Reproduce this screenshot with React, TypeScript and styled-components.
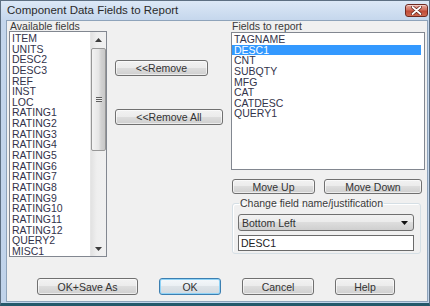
import styled, { createGlobalStyle } from 'styled-components';

const FONT = "'Liberation Sans Narrow', 'Arial Narrow', 'Liberation Sans', Arial, sans-serif";

const GlobalStyle = createGlobalStyle`
  html, body {
    margin: 0;
    padding: 0;
    background: #ffffff;
  }
  body {
    font-family: ${FONT};
    color: #000;
  }
`;

const availableFields = [
  'ITEM',
  'UNITS',
  'DESC2',
  'DESC3',
  'REF',
  'INST',
  'LOC',
  ...Array.from({ length: 12 }, (_, i) => `RATING${i + 1}`),
  'QUERY2',
  'MISC1',
];

const reportFields = ['TAGNAME', 'DESC1', 'CNT', 'SUBQTY', 'MFG', 'CAT', 'CATDESC', 'QUERY1'];

const App = () => {
  return (
    <>
      <GlobalStyle />
      <Window>
        <TitleBar>
          <Title>Component Data Fields to Report</Title>
          <CloseButton aria-label="close">
            <svg width="11" height="9" viewBox="0 0 11 9">
              <path d="M1.5 1 L9.5 8 M9.5 1 L1.5 8" stroke="#5a1d17" strokeWidth="3.2" strokeLinecap="round" />
              <path d="M1.5 1 L9.5 8 M9.5 1 L1.5 8" stroke="#ffffff" strokeWidth="1.8" strokeLinecap="round" />
            </svg>
          </CloseButton>
        </TitleBar>

        <Client>
          <Main>
            <Column>
              <Label>Available fields</Label>
              <ListBox $height={226}>
                <ListItems>
                  {availableFields.map((field) => (
                    <ListItem key={field}>{field}</ListItem>
                  ))}
                </ListItems>
                <ScrollBar>
                  <ArrowButton>
                    <svg width="7" height="4" viewBox="0 0 7 4">
                      <path d="M0 4 L3.5 0 L7 4 Z" fill="#3c3c3c" />
                    </svg>
                  </ArrowButton>
                  <Thumb>
                    <Grip />
                  </Thumb>
                  <Track />
                  <ArrowButton>
                    <svg width="7" height="4" viewBox="0 0 7 4">
                      <path d="M0 0 L7 0 L3.5 4 Z" fill="#3c3c3c" />
                    </svg>
                  </ArrowButton>
                </ScrollBar>
              </ListBox>
            </Column>

            <MiddleColumn>
              <Button $width={93} $height={16}>&lt;&lt;Remove</Button>
              <Button $width={108} $height={16}>&lt;&lt;Remove All</Button>
            </MiddleColumn>

            <Column>
              <Label>Fields to report</Label>
              <ListBox $height={138} $offset={1}>
                <ListItems>
                  {reportFields.map((field) => (
                    <ListItem key={field} $selected={field === 'DESC1'}>
                      {field}
                    </ListItem>
                  ))}
                </ListItems>
              </ListBox>
              <MoveRow>
                <Button $width={83} $height={15}>Move Up</Button>
                <Button $width={98} $height={15}>Move Down</Button>
              </MoveRow>
              <GroupBox>
                <Legend>Change field name/justification</Legend>
                <Select>
                  <span>Bottom Left</span>
                  <svg width="7" height="4" viewBox="0 0 7 4">
                    <path d="M0 0 L7 0 L3.5 4 Z" fill="#111" />
                  </svg>
                </Select>
                <TextInput defaultValue="DESC1" />
              </GroupBox>
            </Column>
          </Main>

          <Footer>
            <Button $width={101} $height={17}>OK+Save As</Button>
            <Button $width={62} $height={17} $default>OK</Button>
            <Button $width={72} $height={17}>Cancel</Button>
            <Button $width={60} $height={17}>Help</Button>
          </Footer>
        </Client>
      </Window>
    </>
  );
};

export default App;

const Window = styled.div`
  box-sizing: border-box;
  width: 430px;
  height: 306px;
  display: flex;
  flex-direction: column;
  padding: 0 1px 1px 5px;
  border-top: 1px solid #5d6f82;
  border-left: 1px solid #5d6f82;
  border-right: 1px solid #5d6f82;
  border-bottom: 3px solid #24586a;
  background: linear-gradient(#dce8f6, #c4d6ec 20px, #c0d3ea);
`;

const TitleBar = styled.div`
  height: 19px;
  display: flex;
  align-items: flex-start;
  justify-content: space-between;
`;

const Title = styled.span`
  margin-top: 3px;
  margin-left: 1px;
  font-size: 11.5px;
  line-height: 13px;
  color: #2a2a2a;
`;

const CloseButton = styled.div`
  box-sizing: border-box;
  width: 23px;
  height: 13px;
  margin-top: 3px;
  display: flex;
  align-items: center;
  justify-content: center;
  border: 1px solid #6e2a22;
  border-radius: 3px;
  background: linear-gradient(#e9a99c, #d0705f 45%, #c04a37 55%, #cf6a52);
  box-shadow: inset 0 1px 0 rgba(255, 255, 255, 0.45);
`;

const Client = styled.div`
  flex: 1;
  display: flex;
  flex-direction: column;
  border: 1px solid #8ea3ba;
  background: #f0f0f0;
`;

const Main = styled.div`
  display: grid;
  grid-template-columns: 98px 108px 194px;
  column-gap: 8px;
  padding-left: 2px;
`;

const Column = styled.div`
  display: flex;
  flex-direction: column;
`;

const MiddleColumn = styled.div`
  display: flex;
  flex-direction: column;
  gap: 33px;
  padding-top: 39px;
`;

const Label = styled.div`
  height: 10px;
  padding-left: 1px;
  font-size: 10.5px;
  line-height: 11px;
  color: #3a3a3a;
  white-space: nowrap;
`;

const ListBox = styled.div<{ $height: number; $offset?: number }>`
  box-sizing: border-box;
  height: ${(p) => p.$height}px;
  margin-top: ${(p) => p.$offset ?? 0}px;
  display: flex;
  border: 1px solid #828790;
  background: #ffffff;
  overflow: hidden;
`;

const ListItems = styled.div`
  flex: 1;
  padding: 1px 3px 0 0;
`;

const ListItem = styled.div<{ $selected?: boolean }>`
  height: 10.65px;
  padding-left: 2px;
  font-size: 10.5px;
  line-height: 10.65px;
  white-space: nowrap;
  color: ${(p) => (p.$selected ? '#ffffff' : '#33334a')};
  background: ${(p) => (p.$selected ? '#3399ff' : 'transparent')};
`;

const ScrollBar = styled.div`
  width: 15px;
  display: flex;
  flex-direction: column;
  background: linear-gradient(90deg, #e2e2e2, #efefef 40%, #f0f0f0);
  border-left: 1px solid #e6e6e6;
`;

const ArrowButton = styled.div`
  height: 15px;
  display: flex;
  align-items: center;
  justify-content: center;
`;

const Thumb = styled.div`
  box-sizing: border-box;
  height: 103px;
  margin: 1px 0 0 0;
  display: flex;
  align-items: center;
  justify-content: center;
  border: 1px solid #979797;
  border-radius: 2px;
  background: linear-gradient(90deg, #f3f3f3, #e6e6e6 50%, #d2d2d2 70%, #c8c8c8);
`;

const Grip = styled.div`
  width: 6px;
  height: 5px;
  background: repeating-linear-gradient(#5f5f5f 0 1px, #eeeeee 1px 2px);
`;

const Track = styled.div`
  flex: 1;
`;

const Button = styled.div<{ $width: number; $height: number; $default?: boolean }>`
  box-sizing: border-box;
  width: ${(p) => p.$width}px;
  height: ${(p) => p.$height}px;
  display: flex;
  align-items: center;
  justify-content: center;
  font-size: 10.5px;
  color: #333;
  white-space: nowrap;
  border: 1px solid ${(p) => (p.$default ? '#3c7fb1' : '#707070')};
  border-radius: 3px;
  background: ${(p) =>
    p.$default
      ? 'linear-gradient(#f4f8fb, #eaeff3 50%, #dde3e8 50%, #d2dae0)'
      : 'linear-gradient(#f2f2f2, #ebebeb 50%, #dddddd 50%, #cfcfcf)'};
  box-shadow: ${(p) =>
    p.$default ? 'inset 0 0 0 1px #8fd3f7' : 'inset 0 0 0 1px rgba(255, 255, 255, 0.6)'};
`;

const MoveRow = styled.div`
  display: flex;
  gap: 9px;
  margin: 9px 0 0 1px;
`;

const GroupBox = styled.fieldset`
  box-sizing: border-box;
  width: 189px;
  margin: 4px 0 0 1px;
  padding: 5px 6px 2px 5px;
  display: flex;
  flex-direction: column;
  gap: 4px;
  border: 1px solid #d5dfe5;
  border-radius: 3px;
  box-shadow: inset 1px 1px 0 #ffffff;
`;

const Legend = styled.legend`
  margin-left: 1px;
  padding: 0 1px;
  font-size: 10.5px;
  line-height: 11px;
  color: #3a3a3a;
`;

const Select = styled.div`
  box-sizing: border-box;
  height: 17px;
  display: flex;
  align-items: center;
  justify-content: space-between;
  padding: 0 5px 0 3px;
  font-size: 10.5px;
  color: #333;
  border: 1px solid #707070;
  border-radius: 3px;
  background: linear-gradient(#f2f2f2, #ebebeb 50%, #dddddd 50%, #cfcfcf);
`;

const TextInput = styled.input`
  box-sizing: border-box;
  width: 176px;
  height: 16px;
  margin: 0;
  padding: 0 2px;
  font-family: ${FONT};
  font-size: 10.5px;
  color: #222;
  border: 1px solid #6b6b6b;
  background: #ffffff;
  outline: none;
`;

const Footer = styled.div`
  display: flex;
  gap: 21px;
  padding-left: 30px;
  margin-top: 21px;
`;
